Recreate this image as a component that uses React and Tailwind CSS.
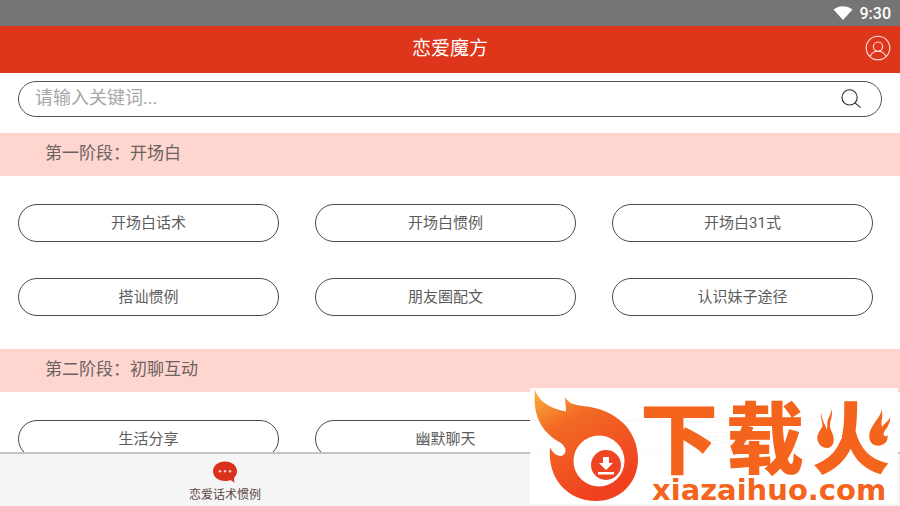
const stages = [
  {
    title: '第一阶段：开场白',
    topics: ['开场白话术', '开场白惯例', '开场白31式', '搭讪惯例', '朋友圈配文', '认识妹子途径'],
  },
  {
    title: '第二阶段：初聊互动',
    topics: ['生活分享', '幽默聊天', '互动与游戏'],
  },
]

function StatusBar() {
  return (
    <div className="flex h-[26px] shrink-0 items-center justify-end gap-[7px] bg-[#757575] pr-[9px] text-white">
      <svg width="20" height="14" viewBox="0 0 20 14" fill="currentColor" aria-hidden="true">
        <path d="M.5 3.500C6-1 14-1 19.500 3.500L10 14z" />
      </svg>
      <span className="pt-px font-[Roboto,sans-serif] text-base font-medium">9:30</span>
    </div>
  )
}

function Header() {
  return (
    <header className="grid h-[47px] shrink-0 grid-cols-[1fr_auto_1fr] items-center bg-[#dd361b] px-[9px] text-white">
      <h1 className="col-start-2 pb-0.5 text-[19px] leading-6">恋爱魔方</h1>
      <button aria-label="我的" className="justify-self-end">
        <svg width="26" height="26" viewBox="0 0 26 26" className="-mt-1" fill="none" stroke="#ffe3dc" strokeWidth="1.1">
          <circle cx="13" cy="13" r="11.8" />
          <circle cx="13" cy="11.6" r="4.6" />
          <path d="M5 21.5C6.5 18 9.5 16.2 13 16.2S19.5 18 21 21.5" />
        </svg>
      </button>
    </header>
  )
}

function SearchBox() {
  return (
    <form className="mx-[18px] mt-2 mb-4 flex h-9 items-center rounded-[18px] border border-[#55504c] pr-5 pl-4">
      <input
        type="text"
        aria-label="请输入关键词"
        placeholder="请输入关键词..."
        className="min-w-0 flex-1 bg-transparent pb-0.5 text-lg leading-6 outline-none placeholder:text-[#a6a6a6]"
      />
      <button type="button" aria-label="搜索">
        <svg width="20" height="20" viewBox="0 0 20 20" fill="none" stroke="#2b2b2b" strokeWidth="1.1">
          <circle cx="8.6" cy="8.4" r="7.6" />
          <path d="M14 13.800L19.600 18.600" />
        </svg>
      </button>
    </form>
  )
}

function Stage({ title, topics }) {
  return (
    <section>
      <h2 className="bg-[#ffd5cf] px-[45px] pt-2 pb-[11px] text-[17px] leading-6 text-[#6b6361]">{title}</h2>
      <div className="grid grid-cols-3 gap-9 pt-[28px] pr-[27px] pb-[33px] pl-[18px]">
        {topics.map((topic) => (
          <button key={topic} className="h-[38px] rounded-full border border-[#4f4a46] text-[15px] leading-5 text-[#5c5c5c]">
            {topic}
          </button>
        ))}
      </div>
    </section>
  )
}

function TabBar() {
  return (
    <nav className="grid h-[54px] shrink-0 grid-cols-2 border-t-2 border-[#c4c4c4] bg-[#f5f5f5]">
      <button className="flex flex-col items-center pt-[7px] text-xs leading-4 text-[#5a4844]">
        <svg width="26" height="22" viewBox="0 0 26 22" className="mb-1" aria-hidden="true">
          <path d="M13 .5C6 .5 1 4.800 1 10.300S6 20 13 20c2 0 4-.3 5.500-1 1.400 1.200 2.800 2 4.300 2.500-.8-1.500-1-3-.6-4.700 1.800-1.700 2.800-4 2.800-6.500C25 4.800 20 .5 13 .5z" fill="#d8321c" />
          <g fill="#fbd0c8">
            <circle cx="8" cy="10.300" r="1.200" />
            <circle cx="13" cy="10.300" r="1.200" />
            <circle cx="18" cy="10.300" r="1.200" />
          </g>
        </svg>
        恋爱话术惯例
      </button>
    </nav>
  )
}

// the two small flames that stand for the side strokes of 火
function SmallFlames() {
  return (
    <svg width="80" height="44" viewBox="0 0 240 132" className="absolute top-[18px] right-[4px]" aria-hidden="true">
      <g fill="#fff">
        <path d="M0 0H84V96L62 128H0z" />
        <path d="M140 0H240V128H178L140 86z" />
      </g>
      <g fill="#f4641c">
        <path
          transform="translate(7 7)"
          d="M45 2C45 20 34 28 33 42C32 52 34 58 31 64C29 50 16 38 15 13C10 30 22 44 17 56C10 68 2 78 3 92C5 108 18 120 34 119C50 116 56 100 50 80C47 70 40 62 41 48C42 35 51 20 45 2z"
        />
        <path
          transform="translate(163 8)"
          d="M38 2C42 24 8 45 3 78C1 100 14 112 32 111C50 109 59 98 58 80C50 86 44 80 46 73C49 63 64 55 66 26C58 40 48 44 42 54C34 42 48 24 38 2z"
        />
      </g>
    </svg>
  )
}

function SiteBadge() {
  return (
    <aside className="absolute right-[2px] bottom-[2px] flex h-[116px] w-[368px] bg-white/95">
      <svg width="110" height="116" viewBox="0 0 110 116" className="shrink-0" aria-hidden="true">
        <defs>
          <linearGradient id="flame" x1="0" y1="0" x2="0.5" y2="1">
            <stop offset="0" stopColor="#fbb03b" />
            <stop offset="0.35" stopColor="#f26a24" />
            <stop offset="1" stopColor="#f0401f" />
          </linearGradient>
        </defs>
        <path
          d="M5 2C9 13 18 20 36 23.500C36 18 35 14 35 9C38 15 44 17 53 18C86 21 108 42 108 71C108 95 90 113 66 113C38 113 17 91 20 59C22 64 26 68 31 68C38 66 36 59 31 55C14 46 2 30 5 2z"
          fill="url(#flame)"
        />
        <circle cx="69" cy="73" r="25.500" fill="#fff" />
        <circle cx="76" cy="77" r="15" fill="#ef4423" />
        <path d="M73 69h6v6h4l-7 7-7-7h4zM68 84h16v2.500H68z" fill="#fff" />
      </svg>
      <div className="relative flex flex-1 flex-col pt-5 text-[#f4641c]">
        <p className="flex gap-2 text-[78px] leading-[68px] font-black">
          <span>下</span>
          <span>载</span>
          <span>火</span>
        </p>
        <SmallFlames />
        <a href="#" className="pl-3 font-['DejaVu_Sans',sans-serif] text-[29px] leading-7 font-bold">
          xiazaihuo.com
        </a>
      </div>
    </aside>
  )
}

export default function App() {
  return (
    <div className="relative flex h-screen flex-col overflow-hidden bg-white font-[Roboto,'Noto_Sans_CJK_SC',sans-serif]">
      <StatusBar />
      <Header />
      <main className="min-h-0 flex-1 overflow-hidden">
        <SearchBox />
        {stages.map((stage) => (
          <Stage key={stage.title} {...stage} />
        ))}
      </main>
      <TabBar />
      <SiteBadge />
    </div>
  )
}
